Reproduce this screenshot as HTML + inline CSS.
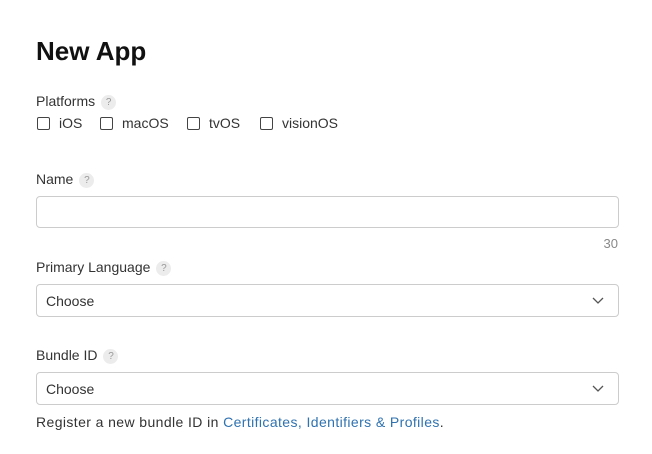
<!DOCTYPE html>
<html><head><meta charset="utf-8"><style>
body{margin:0;width:652px;height:454px;background:#fff;font-family:"Liberation Sans",sans-serif;color:#1d1d1f;position:relative;overflow:hidden}
.a{position:absolute;white-space:nowrap}
h1{position:absolute;left:36px;top:36px;margin:0;font-size:26px;font-weight:bold;color:#111}
.l{font-size:14px;color:#333}
.q{display:inline-block;width:15px;height:15px;border-radius:50%;background:#ececec;color:#999;font-size:10px;text-align:center;line-height:15px;margin-left:6px;vertical-align:1px}
.cb{position:absolute;width:11px;height:11px;border:1px solid #444;border-radius:2px;top:117px}
.box{position:absolute;left:36px;width:581px;border:1px solid #ccc;border-radius:4px;background:#fff}
.ch{position:absolute;right:14px;top:10px}
</style></head><body>
<h1>New App</h1>
<div class="a l" style="left:36px;top:93px">Platforms<span class="q">?</span></div>
<div class="cb" style="left:37px"></div><div class="a l" style="left:59px;top:115px">iOS</div>
<div class="cb" style="left:100px"></div><div class="a l" style="left:122px;top:115px">macOS</div>
<div class="cb" style="left:187px"></div><div class="a l" style="left:209px;top:115px">tvOS</div>
<div class="cb" style="left:260px"></div><div class="a l" style="left:282px;top:115px">visionOS</div>
<div class="a l" style="left:36px;top:171px">Name<span class="q">?</span></div>
<div class="box" style="top:196px;height:30px"></div>
<div class="a" style="right:34px;top:236px;font-size:13px;color:#888">30</div>
<div class="a l" style="left:36px;top:259px">Primary Language<span class="q">?</span></div>
<div class="box" style="top:284px;height:31px"><span class="a l" style="left:9px;top:8px">Choose</span>
<svg class="ch" width="12" height="10" viewBox="0 0 12 10"><path d="M1 3l5 5 5-5" fill="none" stroke="#555" stroke-width="1.3"/></svg></div>
<div class="a l" style="left:36px;top:347px">Bundle ID<span class="q">?</span></div>
<div class="box" style="top:372px;height:31px"><span class="a l" style="left:9px;top:8px">Choose</span>
<svg class="ch" width="12" height="10" viewBox="0 0 12 10"><path d="M1 3l5 5 5-5" fill="none" stroke="#555" stroke-width="1.3"/></svg></div>
<div class="a l" style="left:36px;top:414px;letter-spacing:0.4px">Register a new bundle ID in <span style="color:#2f72b0">Certificates, Identifiers &amp; Profiles</span>.</div>
</body></html>
